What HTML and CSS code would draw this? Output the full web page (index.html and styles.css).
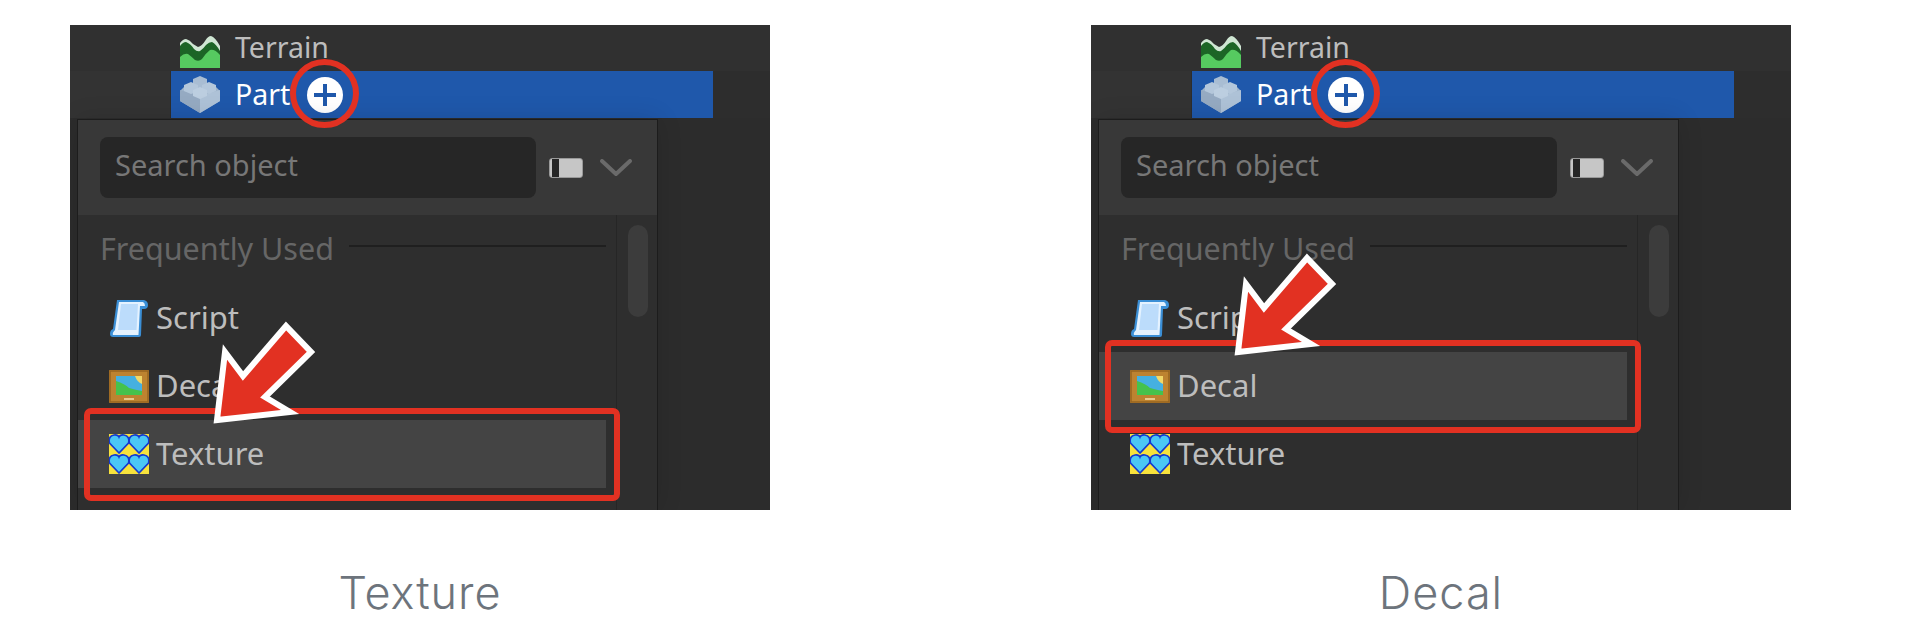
FILE: index.html
```html
<!DOCTYPE html>
<html lang="en">
<head>
<meta charset="utf-8">
<title>Texture and Decal</title>
<link rel="stylesheet" href="styles.css">
</head>
<body>
<svg class="defs" aria-hidden="true">
  <symbol id="i-terrain" viewBox="0 0 40 32">
    <path d="M0 7 Q3 3 6 3 Q10 4 13 8 L18 11 Q22 10 25 5 Q28 0 31 0 Q35 1 40 10 V32 H0Z" fill="#cfe6d3"/>
    <path d="M0 10 Q3 6 6 6 Q11 8 14 13 Q17 16 20 15 Q24 12 26 9 Q29 6 32 6 Q36 8 40 15 V32 H0Z" fill="#1c6526"/>
    <path d="M0 21 Q4 17 8 18 Q12 21 15 24 Q19 26 22 23 Q26 17 30 14 Q35 13 40 19 V32 H0Z" fill="#56ca60"/>
  </symbol>
  <symbol id="i-part" viewBox="0 0 40 37">
    <path d="M4 11 L20 5 L36 11 L40 15 V25 L20 37 L0 25 V15Z" fill="#9fb4cb"/>
    <path d="M20 20 L40 14 V25 L20 37Z" fill="#aec2d7"/>
    <path d="M0 14 L20 20 V37 L0 25Z" fill="#95aac2"/>
    <path d="M13 3 L20 0 L27 3 V10 L20 13 L13 10Z" fill="#a9bdd3"/>
    <path d="M4 9 L11 6 L18 9 V15 L11 18 L4 15Z" fill="#b4c7db"/>
    <path d="M22 9 L29 6 L36 9 V15 L29 18 L22 15Z" fill="#b4c7db"/>
    <path d="M13 14 L20 11 L27 14 V20 L20 23 L13 20Z" fill="#bccee0"/>
  </symbol>
  <symbol id="i-script" viewBox="0 0 38 39">
    <path d="M7 1 H34 Q38 2 38 6 Q38 10 34 10 H32 L31 36 Q31 38 29 38 H3 Q0 38 0 35 Q0 31 3 30 Z" fill="#3b8fd6"/>
    <path d="M9 3 H33 Q35 4 35 7 H30 L28.5 36 H3 Q2 34 5 31 Z" fill="#e4f2ff"/>
    <path d="M11 5 H28 L26.5 31 H8Z" fill="#bcdcfb"/>
  </symbol>
  <symbol id="i-decal" viewBox="0 0 40 33">
    <rect width="40" height="33" rx="1" fill="#bd8330"/>
    <rect x="1" y="1" width="38" height="31" fill="none" stroke="#96641f" stroke-width="1.5"/>
    <rect x="7" y="6" width="26" height="19" fill="#45b0e0"/>
    <path d="M7 11 Q16 14 20 18 Q27 20 33 21 V25 H7Z" fill="#45c24c"/>
    <path d="M26 6 H33 V14 Q28 12 26 6Z" fill="#f1d768"/>
    <rect x="15" y="28" width="10" height="2" fill="#e7c98c"/>
  </symbol>
  <symbol id="i-texture" viewBox="0 0 40 40">
    <rect width="40" height="40" fill="#f7e23c"/>
    <path d="M10 19 L0.5 9 Q-1 2 5 1 Q9 0.5 10 3 Q11 0.5 15 1 Q21 2 19.5 9Z" fill="#4bc7f5" stroke="#1438d0" stroke-width="1.6"/>
    <path d="M30 19 L20.5 9 Q19 2 25 1 Q29 0.5 30 3 Q31 0.5 35 1 Q41 2 39.5 9Z" fill="#4bc7f5" stroke="#1438d0" stroke-width="1.6"/>
    <path d="M10 39 L0.5 29 Q-1 22 5 21 Q9 20.5 10 23 Q11 20.5 15 21 Q21 22 19.5 29Z" fill="#4bc7f5" stroke="#1438d0" stroke-width="1.6"/>
    <path d="M30 39 L20.5 29 Q19 22 25 21 Q29 20.5 30 23 Q31 20.5 35 21 Q41 22 39.5 29Z" fill="#4bc7f5" stroke="#1438d0" stroke-width="1.6"/>
  </symbol>
  <symbol id="i-arrow" viewBox="0 0 110 110">
    <polygon points="7,102 15,34 33,58 76,8 101,34 55,79 80,94" fill="#e23122" stroke="#fff" stroke-width="6" stroke-linejoin="miter"/>
  </symbol>
  <symbol id="i-chevron" viewBox="0 0 32 18">
    <polyline points="2,2 16,15 30,2" fill="none" stroke="#6a6a6a" stroke-width="4" stroke-linejoin="round" stroke-linecap="round"/>
  </symbol>
</svg>

<main class="gallery">
  <figure class="figure">
    <div class="panel">
      <div class="tree-row">
        <svg class="icon icon-terrain"><use href="#i-terrain"/></svg>
        <span class="tree-label">Terrain</span>
      </div>
      <div class="band">
        <div class="tree-row tree-row-selected">
          <svg class="icon icon-part"><use href="#i-part"/></svg>
          <span class="tree-label tree-label-selected">Part</span>
          <span class="plus"></span>
        </div>
      </div>
      <div class="popup">
        <div class="popup-head">
          <div class="search">Search object</div>
          <span class="toggle"></span>
          <svg class="chevron"><use href="#i-chevron"/></svg>
        </div>
        <div class="popup-body">
          <div class="list">
            <div class="group"><span class="group-name">Frequently Used</span><span class="group-line"></span></div>
            <div class="item"><svg class="icon icon-script"><use href="#i-script"/></svg><span class="item-label">Script</span></div>
            <div class="item"><svg class="icon icon-decal"><use href="#i-decal"/></svg><span class="item-label">Decal</span></div>
            <div class="item item-active"><svg class="icon icon-texture"><use href="#i-texture"/></svg><span class="item-label">Texture</span></div>
          </div>
          <div class="rail"><span class="thumb"></span></div>
        </div>
      </div>
      <span class="ring"></span>
      <span class="mark mark-texture"></span>
      <svg class="arrow arrow-texture"><use href="#i-arrow"/></svg>
    </div>
    <figcaption class="caption">Texture</figcaption>
  </figure>

  <figure class="figure">
    <div class="panel">
      <div class="tree-row">
        <svg class="icon icon-terrain"><use href="#i-terrain"/></svg>
        <span class="tree-label">Terrain</span>
      </div>
      <div class="band">
        <div class="tree-row tree-row-selected">
          <svg class="icon icon-part"><use href="#i-part"/></svg>
          <span class="tree-label tree-label-selected">Part</span>
          <span class="plus"></span>
        </div>
      </div>
      <div class="popup">
        <div class="popup-head">
          <div class="search">Search object</div>
          <span class="toggle"></span>
          <svg class="chevron"><use href="#i-chevron"/></svg>
        </div>
        <div class="popup-body">
          <div class="list">
            <div class="group"><span class="group-name">Frequently Used</span><span class="group-line"></span></div>
            <div class="item"><svg class="icon icon-script"><use href="#i-script"/></svg><span class="item-label">Script</span></div>
            <div class="item item-active"><svg class="icon icon-decal"><use href="#i-decal"/></svg><span class="item-label">Decal</span></div>
            <div class="item"><svg class="icon icon-texture"><use href="#i-texture"/></svg><span class="item-label">Texture</span></div>
          </div>
          <div class="rail"><span class="thumb"></span></div>
        </div>
      </div>
      <span class="ring"></span>
      <span class="mark mark-decal"></span>
      <svg class="arrow arrow-decal"><use href="#i-arrow"/></svg>
    </div>
    <figcaption class="caption">Decal</figcaption>
  </figure>
</main>
</body>
</html>
```
FILE: styles.css
```css
* { box-sizing: border-box; }
html, body { margin: 0; background: #fff; }
body { height: 644px; overflow: hidden; }
.defs { position: absolute; width: 0; height: 0; }

.gallery {
  display: flex;
  gap: 321px;
  padding: 25px 0 0 70px;
}
.figure { margin: 0; width: 700px; }
.panel {
  position: relative;
  height: 485px;
  overflow: hidden;
  background: #2c2c2c;
  font-family: "Noto Sans", sans-serif;
  font-size: 29px;
  color: #bdbdbd;
}
.caption {
  margin-top: 55px;
  text-align: center;
  font-family: Inter, sans-serif;
  font-weight: 300;
  font-size: 45px;
  letter-spacing: 1px;
  line-height: 56px;
  color: #6d747c;
}
.icon { filter: blur(0.5px); }

.tree-row {
  display: flex;
  align-items: center;
  height: 46px;
  margin-left: 110px;
}
.panel > .tree-row { margin-left: 0; padding-left: 110px; background: #303030; }
.tree-label { margin-left: 15px; padding-bottom: 2px; font-size: 28.5px; line-height: 40px; }
.band { background: linear-gradient(90deg, #333 0 100px, #2d2d2d 100px); height: 47px; }
.tree-row-selected {
  height: 47px;
  width: 542px;
  margin-left: 101px;
  padding-left: 9px;
  background: #1f58ab;
}
.tree-label-selected { color: #fff; }
.icon-terrain { width: 40px; height: 32px; margin-top: 7px; }
.icon-part { width: 40px; height: 37px; }
.plus {
  position: relative;
  width: 36px;
  height: 36px;
  margin-left: 17px;
  border-radius: 50%;
  background: #fff;
}
.plus::before, .plus::after {
  content: "";
  position: absolute;
  background: #1f58ab;
}
.plus::before { left: 7px; right: 7px; top: 16px; height: 4px; }
.plus::after { top: 7px; bottom: 7px; left: 16px; width: 4px; }

.popup {
  position: relative;
  margin: 1px 0 0 7px;
  width: 581px;
  height: 391px;
  background: #2e2e2e;
  border: 1px solid #1c1c1c;
  border-bottom: 0;
  box-shadow: 0 0 24px rgba(0, 0, 0, 0.12);
}
.popup-head {
  display: flex;
  align-items: center;
  height: 95px;
  padding-left: 22px;
  background: #383838;
}
.search {
  width: 436px;
  height: 61px;
  padding-left: 15px;
  border-radius: 8px;
  background: #262626;
  color: #777;
  line-height: 55px;
}
.toggle {
  width: 34px;
  height: 20px;
  margin-left: 13px;
  border: 1px solid #999;
  border-radius: 3px;
  background: linear-gradient(90deg, #c6c6c6 0 2px, #262626 2px 9px, #c6c6c6 9px);
}
.chevron { width: 32px; height: 18px; margin-left: 17px; }
.popup-body { display: flex; height: 296px; }
.list { width: 538px; padding-right: 10px; }
.group {
  display: flex;
  align-items: center;
  height: 69px;
  padding: 0 0 8px 22px;
  color: #666;
}
.group-name { padding-top: 5px; font-size: 30.5px; line-height: 40px; }
.group-line { flex: 1; height: 2px; margin-left: 15px; background: #1f1f1f; }
.item {
  display: flex;
  align-items: center;
  gap: 7px;
  height: 68px;
  padding-left: 31px;
}
.item-label { padding-bottom: 2px; font-size: 31px; line-height: 40px; }
.item-active { background: #444; }
.icon-script { width: 38px; height: 39px; margin: 0 1px; }
.icon-decal { width: 40px; height: 33px; }
.icon-texture { width: 40px; height: 40px; }
.rail {
  flex: 1;
  padding: 10px 0 0 11px;
  border-left: 1px solid #262626;
}
.thumb {
  display: block;
  width: 20px;
  height: 92px;
  border-radius: 10px;
  background: #3c3c3c;
}

.ring {
  position: absolute;
  left: 220px;
  top: 34px;
  width: 69px;
  height: 69px;
  border: 6px solid #e23122;
  border-radius: 50%;
}
.mark {
  position: absolute;
  left: 14px;
  width: 536px;
  height: 93px;
  border: 6px solid #e23122;
  border-radius: 7px;
}
.mark-texture { top: 383px; }
.mark-decal { top: 315px; }
.arrow {
  position: absolute;
  left: 140px;
  width: 110px;
  height: 110px;
}
.arrow-texture { top: 293px; }
.arrow-decal { top: 225px; }
```
